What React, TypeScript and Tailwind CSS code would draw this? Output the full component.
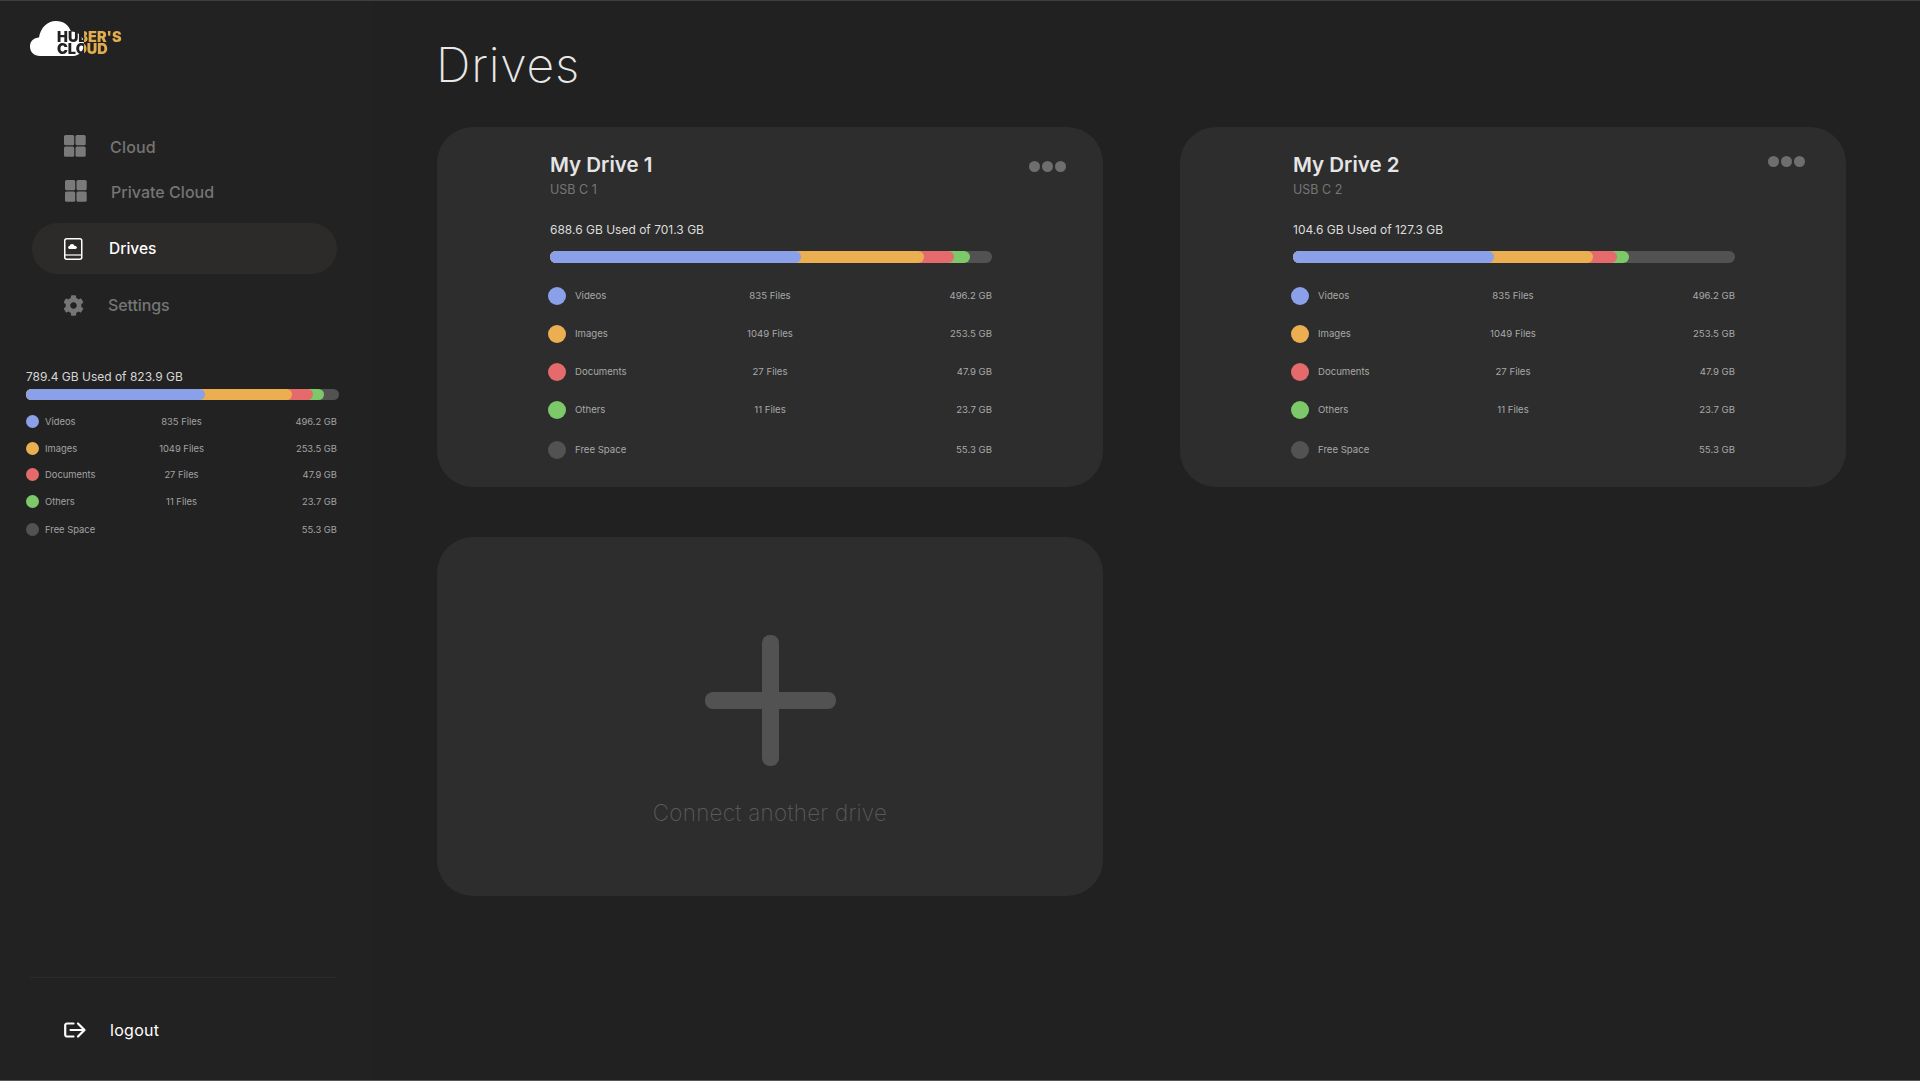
import { FaCog } from "react-icons/fa";

const font = "font-['Inter','Noto_Sans',sans-serif]";

type Row = { label: string; files?: string; size: string; dot: string };

const rows: Row[] = [
  { label: "Videos", files: "835 Files", size: "496.2 GB", dot: "bg-[#8aa0e8]" },
  { label: "Images", files: "1049 Files", size: "253.5 GB", dot: "bg-[#ebaf52]" },
  { label: "Documents", files: "27 Files", size: "47.9 GB", dot: "bg-[#e46a6b]" },
  { label: "Others", files: "11 Files", size: "23.7 GB", dot: "bg-[#7dc96a]" },
  { label: "Free Space", size: "55.3 GB", dot: "bg-[#525252]" },
];

// stops are cumulative percentages of the whole bar: blue, orange, red, green
function UsageBar({ stops, className }: { stops: number[]; className: string }) {
  const [blue, orange, red, green] = stops;
  return (
    <div className={`rounded-full bg-[#525252] ${className}`}>
      <div className="h-full rounded-full bg-[#7dc96a]" style={{ width: `${green}%` }}>
        <div className="h-full rounded-full bg-[#e46a6b]" style={{ width: `${(red / green) * 100}%` }}>
          <div className="h-full rounded-full bg-[#ebaf52]" style={{ width: `${(orange / red) * 100}%` }}>
            <div className="h-full rounded-full bg-[#8aa0e8]" style={{ width: `${(blue / orange) * 100}%` }} />
          </div>
        </div>
      </div>
    </div>
  );
}

function GridIcon() {
  return (
    <svg width="22" height="22" viewBox="0 0 22 22" fill="#7a7a7a">
      <rect x="0" y="0" width="10.2" height="10.2" rx="1.5" />
      <rect x="11.500" y="0" width="10.2" height="10.2" rx="1.5" />
      <rect x="0" y="11.500" width="10.2" height="10.2" rx="1.5" />
      <rect x="11.500" y="11.500" width="10.2" height="10.2" rx="1.5" />
    </svg>
  );
}

function DriveIcon() {
  return (
    <svg width="19" height="22" viewBox="0 0 19 22" fill="none">
      <rect x="0.75" y="0.75" width="17" height="20.5" rx="2" stroke="white" strokeWidth="1.5" />
      <path d="M1 17h17" stroke="white" strokeWidth="1.2" />
      <path
        d="M6 11c-1.2 0-1.9-.8-1.9-1.6 0-.9.7-1.5 1.500-1.500.3-1.100 1.200-1.800 2.400-1.800 1.300 0 2.300.8 2.600 1.900 1.200-.2 2.300.5 2.300 1.600 0 .9-.7 1.400-1.500 1.400H6z"
        fill="white"
      />
    </svg>
  );
}

function LogoutIcon() {
  return (
    <svg width="22" height="16" viewBox="0 0 22 16" fill="none" stroke="white" strokeWidth="2.2" strokeLinecap="round" strokeLinejoin="round">
      <path d="M9.500 1.500H3a1.800 1.800 0 0 0-1.800 1.800v9.400A1.800 1.800 0 0 0 3 14.500h6.500" />
      <path d="M6.500 8h13.500" />
      <path d="M14 1.500 20.500 8 14 14.500" />
    </svg>
  );
}

function Logo() {
  return (
    <div className="relative h-[35px] w-[93px]">
      <svg width="54" height="35" viewBox="0 0 54 35" fill="white">
        <path d="M10 35C4 35 0 31 0 25.500 0 20 4 16.500 9 16.500 10.500 7 17 0 26 0 33.500 0 38.500 4 41 10.500 48.500 10.500 54 16 54 23 54 30 49 35 43 35H10z" />
      </svg>
      {/* text colour flips where the letters leave the cloud */}
      <div className="absolute left-[27px] top-[10px] bg-[linear-gradient(90deg,#212121_27px,#e3ac4c_27px)] bg-clip-text text-[14.500px] font-black leading-[12px] text-transparent">
        <div>HUBER'S</div>
        <div>CLOUD</div>
      </div>
    </div>
  );
}

function Sidebar() {
  return (
    <aside className="flex h-full w-[370px] shrink-0 flex-col bg-[#222222] pt-[20px]">
      <div className="pl-[30px]">
        <Logo />
      </div>
      <nav className="mt-[79px] flex flex-col">
        <div className="flex h-[22px] items-center pl-[64px]">
          <GridIcon />
          <span className="ml-[24px] pt-[2px] text-[16px] font-medium tracking-[0.2px] text-[#757575]">Cloud</span>
        </div>
        <div className="mt-[23px] flex h-[22px] items-center pl-[65px]">
          <GridIcon />
          <span className="ml-[24px] pt-[2px] text-[16px] font-medium tracking-[0.03px] text-[#757575]">Private Cloud</span>
        </div>
        <div className="ml-[32px] mt-[21px] flex h-[51px] w-[305px] items-center rounded-full bg-[#2c2b29] pl-[32px]">
          <DriveIcon />
          <span className="ml-[26px] text-[15.500px] font-medium text-white">Drives</span>
        </div>
        <div className="mt-[20px] flex h-[22px] items-center pl-[63px]">
          <FaCog size={21} color="#757575" />
          <span className="ml-[24px] text-[16px] font-medium tracking-[-0.1px] text-[#757575]">Settings</span>
        </div>
      </nav>
      <div className="ml-[26px] mt-[51px] w-[313px]">
        <p className="text-[12px] leading-[20px] text-[#d6d6d6]">789.4 GB Used of 823.9 GB</p>
        <UsageBar stops={[57.2, 85, 91.7, 95.2]} className="mt-[2px] h-[11px]" />
        <div className="mt-[15px] flex flex-col">
          {rows.map((r, i) => (
            <div key={r.label} className={`grid h-[13px] w-[311px] grid-cols-3 items-center text-[9.400px] leading-[13px] text-[#a3a3a3] ${i === 4 ? "mt-[15px]" : i > 0 ? "mt-[13.600px]" : ""}`}>
              <div className="flex items-center">
                <span className={`h-[13px] w-[13px] shrink-0 rounded-full ${r.dot}`} />
                <span className="ml-[6px] whitespace-nowrap">{r.label}</span>
              </div>
              <span className="text-center">{r.files}</span>
              <span className="text-right">{r.size}</span>
            </div>
          ))}
        </div>
      </div>
      <div className="mx-[30px] mt-auto w-[307px] border-t border-[#2b2b2b]" />
      <div className="mb-[43px] mt-[44px] flex h-[15px] items-center pl-[64px]">
        <LogoutIcon />
        <span className="ml-[24px] text-[16px] tracking-[0.3px] text-white">logout</span>
      </div>
    </aside>
  );
}

function DriveCard({ name, port, used, stops, dotsOffset }: { name: string; port: string; used: string; stops: number[]; dotsOffset: string }) {
  return (
    <div className="flex h-[360px] w-[666px] flex-col rounded-[36px] bg-[#2d2d2d] pl-[113px] pr-[111px] pt-[22px]">
      <div className="relative">
        <h2 className="text-[20.500px] font-semibold leading-[31px] text-[#e5e5e5]">{name}</h2>
        <p className="text-[12.500px] leading-[20px] text-[#767676]">{port}</p>
        <div className={`absolute flex gap-[2px] ${dotsOffset}`}>
          <span className="h-[11px] w-[11px] rounded-full bg-[#6e6e6e]" />
          <span className="h-[11px] w-[11px] rounded-full bg-[#6e6e6e]" />
          <span className="h-[11px] w-[11px] rounded-full bg-[#6e6e6e]" />
        </div>
      </div>
      <p className="mt-[20px] text-[12px] leading-[20px] text-[#dcdcdc]">{used}</p>
      <UsageBar stops={stops} className="mt-[11px] h-[12px]" />
      <div className="mt-[24px] flex flex-col">
        {rows.map((r, i) => (
          <div key={r.label} className={`-ml-[2px] grid h-[18px] grid-cols-3 items-center text-[9.600px] leading-[18px] text-[#a8a8a8] ${i === 4 ? "mt-[22px]" : i > 0 ? "mt-[20px]" : ""}`}>
            <div className="flex items-center">
              <span className={`h-[18px] w-[18px] shrink-0 rounded-full ${r.dot}`} />
              <span className="ml-[9px] whitespace-nowrap">{r.label}</span>
            </div>
            <span className="text-center">{r.files}</span>
            <span className="text-right">{r.size}</span>
          </div>
        ))}
      </div>
    </div>
  );
}

export default function App() {
  return (
    <div className={`flex h-[1081px] w-[1920px] overflow-hidden border-t border-b border-t-[#3f3f3f] border-b-[#555555] bg-[#212121] ${font}`}>
      <Sidebar />
      <main className="flex-1 pl-[67px] pt-[32px]">
        <h1 className="-ml-[1px] text-[48px] font-extralight leading-[64px] tracking-[0.8px] text-[#e8e8e8]">Drives</h1>
        <div className="mt-[30px] grid grid-cols-[666px_666px] gap-x-[77px] gap-y-[50px]">
          <DriveCard name="My Drive 1" port="USB C 1" used="688.6 GB Used of 701.3 GB" stops={[56.8, 84.6, 91.4, 95]} dotsOffset="right-[-74px] top-[12px]" />
          <DriveCard name="My Drive 2" port="USB C 2" used="104.6 GB Used of 127.3 GB" stops={[45.5, 67.9, 73.3, 76]} dotsOffset="right-[-70px] top-[7px]" />
          <div className="flex h-[359px] w-[666px] flex-col items-center rounded-[36px] bg-[#2d2d2d] pt-[98px]">
            <svg width="131" height="131" viewBox="0 0 131 131" fill="#525252">
              <rect x="57" y="0" width="17" height="131" rx="8" />
              <rect x="0" y="57" width="131" height="17" rx="8" />
            </svg>
            <p className="mt-[31px] text-[22.400px] font-extralight leading-[32px] tracking-[0.3px] text-[#5a5a5a]">Connect another drive</p>
          </div>
        </div>
      </main>
    </div>
  );
}
